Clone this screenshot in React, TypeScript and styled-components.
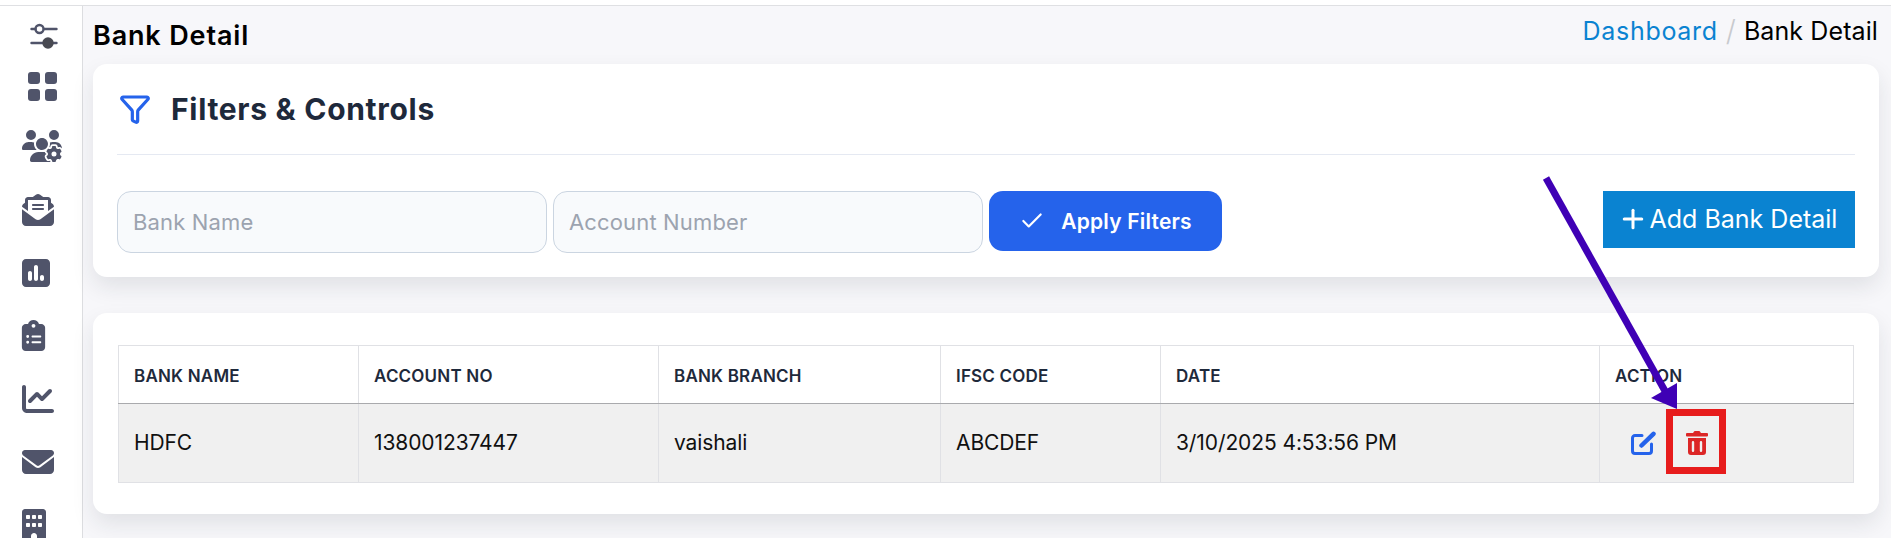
import React from 'react';
import styled, { createGlobalStyle } from 'styled-components';
import { Check, Funnel, Plus } from 'lucide-react';
import {
    FaBuilding,
    FaChartLine,
    FaClipboardList,
    FaEnvelope,
    FaEnvelopeOpenText,
    FaSquarePollVertical,
    FaUsersGear,
} from 'react-icons/fa6';

const GlobalStyle = createGlobalStyle`
    html, body {
        margin: 0;
        padding: 0;
        background: #f7f7fa;
        overflow: hidden;
    }
    * {
        box-sizing: border-box;
    }
`;

const Page = styled.div`
    position: relative;
    width: 1891px;
    height: 538px;
    overflow: hidden;
    font-family: Inter, 'Noto Sans', sans-serif;
    color: #111;
`;

const TopStrip = styled.div`
    height: 6px;
    background: #fff;
    border-bottom: 1px solid #dfe0e3;
`;

const Body = styled.div`
    display: flex;
    height: 532px;
`;

const Sidebar = styled.nav`
    flex: 0 0 83px;
    background: #fff;
    border-right: 1px solid #dcdde0;
    color: #50546a;
    overflow: hidden;
`;

const NavIcon = styled.div<{ $top: number; $left: number }>`
    display: flex;
    margin: ${(props) => props.$top}px 0 0 ${(props) => props.$left}px;
    line-height: 0;
`;

const Main = styled.main`
    flex: 1;
    padding: 0 12px 0 10px;
`;

const TitleRow = styled.div`
    display: flex;
    justify-content: space-between;
    height: 58px;
`;

const Title = styled.h1`
    margin: 13px 0 0;
    font-size: 27px;
    line-height: 33px;
    font-weight: 600;
    color: #000;
    letter-spacing: 0.85px;
`;

const Breadcrumb = styled.div`
    display: flex;
    align-items: center;
    gap: 8px;
    height: 27px;
    margin: 11px 1px 0 0;
    font-size: 25px;
`;

const Crumb = styled.span<{ $link?: boolean }>`
    color: ${(props) => (props.$link ? '#0a83d1' : '#000')};
    letter-spacing: ${(props) => (props.$link ? '0.7px' : '0.1px')};
`;

const CrumbSlash = styled.span`
    color: #c8cace;
    font-size: 29px;
    font-weight: 300;
`;

const Card = styled.section<{ $height: number }>`
    height: ${(props) => props.$height}px;
    background: #fff;
    border-radius: 14px;
    box-shadow: 0 10px 22px rgba(30, 35, 50, 0.1);
`;

const FilterCard = styled(Card)`
    padding: 0 24px;
    margin-bottom: 36px;
`;

const FilterHeader = styled.div`
    display: flex;
    align-items: center;
    gap: 20px;
    height: 91px;
    padding: 0 0 0 2px;
    border-bottom: 1px solid #e5e9f2;
`;

const FilterTitle = styled.h2`
    margin: 0;
    font-size: 30px;
    line-height: 34px;
    font-weight: 700;
    color: #1e293b;
    letter-spacing: 0.7px;
`;

const FilterBar = styled.div`
    display: flex;
    align-items: flex-start;
    gap: 6px;
    padding-top: 36px;
`;

const TextInput = styled.input`
    width: 430px;
    height: 62px;
    padding: 0 15px;
    background: #f8fafc;
    border: 1px solid #cbd5e1;
    border-radius: 14px;
    font-family: inherit;
    font-size: 22px;
    letter-spacing: 0.15px;
    color: #111;
    &::placeholder {
        color: #9ca3af;
        opacity: 1;
    }
`;

const ApplyButton = styled.button`
    display: flex;
    align-items: center;
    justify-content: center;
    gap: 16px;
    width: 233px;
    height: 60px;
    background: #2563eb;
    border: 0;
    border-radius: 14px;
    color: #fff;
    font-family: inherit;
    font-size: 21px;
    font-weight: 600;
    letter-spacing: 0.2px;
`;

const AddButton = styled.button`
    display: flex;
    align-items: center;
    justify-content: center;
    gap: 2px;
    width: 252px;
    height: 57px;
    margin-left: auto;
    padding: 0 3px 2px 0;
    background: #0a83d1;
    border: 0;
    color: #fff;
    font-family: inherit;
    font-size: 25px;
`;

const TableCard = styled(Card)`
    padding: 32px 25px 0;
`;

const Table = styled.table`
    width: 1735px;
    table-layout: fixed;
    border-collapse: collapse;
`;

const HeadCell = styled.th<{ $width: number }>`
    width: ${(props) => props.$width}px;
    height: 58px;
    padding: 2px 15px 0;
    border: 1px solid #e0e1e5;
    border-bottom: 1px solid #a9aaad;
    text-align: left;
    text-transform: uppercase;
    font-size: 17px;
    font-weight: 600;
    color: #1e293b;
    letter-spacing: 0.2px;
`;

const Row = styled.tr`
    background: #f0f0f0;
`;

const Cell = styled.td`
    height: 79px;
    padding: 0 15px 2px;
    border: 1px solid #e0e1e5;
    font-size: 21px;
    color: #111;
    letter-spacing: -0.1px;
`;

const ActionGroup = styled.div`
    display: flex;
    align-items: center;
    gap: 30px;
    padding: 2px 0 0 16px;
`;

const Annotation = styled.svg`
    position: absolute;
    top: 0;
    left: 0;
    pointer-events: none;
`;

const columns = [
    { label: 'Bank Name', width: 240 },
    { label: 'Account No', width: 300 },
    { label: 'Bank Branch', width: 282 },
    { label: 'IFSC Code', width: 220 },
    { label: 'Date', width: 439 },
    { label: 'Action', width: 254 },
];

const values = ['HDFC', '138001237447', 'vaishali', 'ABCDEF', '3/10/2025 4:53:56 PM'];

const SlidersGlyph = () => (
    <svg width="28" height="26" viewBox="0 0 28 26" fill="none" stroke="#50546a" strokeWidth="2.4" strokeLinecap="round">
        <path d="M1.5 6h4M14 6h12.5M1.5 20h11M23 20h3.5" />
        <circle cx="9.5" cy="6" r="4" />
        <circle cx="18" cy="20" r="4.5" fill="#484a52" stroke="#484a52" />
    </svg>
);

const GridGlyph = () => (
    <svg width="29" height="29" viewBox="0 0 29 29" fill="#50546a">
        <rect width="12" height="12" rx="3" />
        <rect x="17" width="12" height="12" rx="3" />
        <rect y="17" width="12" height="12" rx="3" />
        <rect x="17" y="17" width="12" height="12" rx="3" />
    </svg>
);

const EditGlyph = () => (
    <svg width="25" height="24" viewBox="0 0 25 24" fill="none" stroke="#2563eb" strokeLinecap="round">
        <path d="M11 4.5H4a2.5 2.5 0 0 0-2.5 2.5v13A2.5 2.5 0 0 0 4 22.500h14a2.500 2.500 0 0 0 2.500-2.500v-7" strokeWidth="3" />
        <path d="M10.500 14.500 22.500 2.800" strokeWidth="4.500" />
    </svg>
);

const TrashGlyph = () => (
    <svg width="22" height="24" viewBox="0 0 22 24" fill="#dc2626">
        <path d="M7.500 1.200C7.800.4 8.400 0 9.200 0h3.600c.8 0 1.400.4 1.700 1.200l.4.800H21a1 1 0 0 1 1 1v1.500a1 1 0 0 1-1 1H1a1 1 0 0 1-1-1V3a1 1 0 0 1 1-1h6.100z" />
        <path
            fillRule="evenodd"
            d="M2 7h18v14a3 3 0 0 1-3 3H5a3 3 0 0 1-3-3zM7 10a1.200 1.200 0 0 0-1.200 1.200v8.600a1.200 1.200 0 0 0 2.400 0v-8.600A1.200 1.200 0 0 0 7 10zm8 0a1.200 1.200 0 0 0-1.200 1.200v8.600a1.200 1.200 0 0 0 2.400 0v-8.600A1.200 1.200 0 0 0 15 10z"
        />
    </svg>
);

const App = (): JSX.Element => {
    return (
        <Page>
            <GlobalStyle />
            <TopStrip />
            <Body>
                <Sidebar>
                    <NavIcon $top={17} $left={30}><SlidersGlyph /></NavIcon>
                    <NavIcon $top={23} $left={28}><GridGlyph /></NavIcon>
                    <NavIcon $top={25} $left={22}><FaUsersGear size={40} /></NavIcon>
                    <NavIcon $top={28} $left={22}><FaEnvelopeOpenText size={32} /></NavIcon>
                    <NavIcon $top={31} $left={20}><FaSquarePollVertical size={32} /></NavIcon>
                    <NavIcon $top={31} $left={18}><FaClipboardList size={31} /></NavIcon>
                    <NavIcon $top={32} $left={22}><FaChartLine size={32} /></NavIcon>
                    <NavIcon $top={31} $left={22}><FaEnvelope size={32} /></NavIcon>
                    <NavIcon $top={31} $left={18}><FaBuilding size={32} /></NavIcon>
                </Sidebar>
                <Main>
                    <TitleRow>
                        <Title>Bank Detail</Title>
                        <Breadcrumb>
                            <Crumb $link>Dashboard</Crumb>
                            <CrumbSlash>/</CrumbSlash>
                            <Crumb>Bank Detail</Crumb>
                        </Breadcrumb>
                    </TitleRow>
                    <FilterCard $height={213}>
                        <FilterHeader>
                            <Funnel size={32} color="#2563eb" strokeWidth={2.4} />
                            <FilterTitle>Filters &amp; Controls</FilterTitle>
                        </FilterHeader>
                        <FilterBar>
                            <TextInput placeholder="Bank Name" />
                            <TextInput placeholder="Account Number" />
                            <ApplyButton>
                                <Check size={26} strokeWidth={2} />
                                Apply Filters
                            </ApplyButton>
                            <AddButton>
                                <Plus size={30} strokeWidth={2.4} />
                                Add Bank Detail
                            </AddButton>
                        </FilterBar>
                    </FilterCard>
                    <TableCard $height={201}>
                        <Table>
                            <thead>
                                <tr>
                                    {columns.map((column) => (
                                        <HeadCell key={column.label} $width={column.width}>{column.label}</HeadCell>
                                    ))}
                                </tr>
                            </thead>
                            <tbody>
                                <Row>
                                    {values.map((value) => (
                                        <Cell key={value}>{value}</Cell>
                                    ))}
                                    <Cell>
                                        <ActionGroup>
                                            <EditGlyph />
                                            <TrashGlyph />
                                        </ActionGroup>
                                    </Cell>
                                </Row>
                            </tbody>
                        </Table>
                    </TableCard>
                </Main>
            </Body>
            <Annotation width="1891" height="538" viewBox="0 0 1891 538">
                <line x1="1546" y1="178" x2="1665" y2="391" stroke="#3f00b5" strokeWidth="7" />
                <polygon points="1677,409 1677,383 1651,398" fill="#3f00b5" />
                <rect x="1669.5" y="412.5" width="53" height="58" fill="none" stroke="#e71c1c" strokeWidth="7" />
            </Annotation>
        </Page>
    );
};

export default App;
